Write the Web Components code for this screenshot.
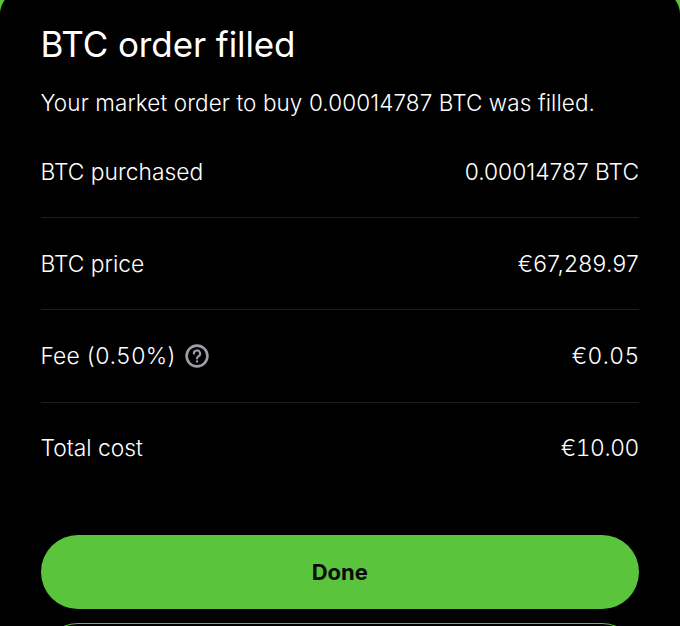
<!DOCTYPE html>
<html><head><meta charset="utf-8">
<style>
html,body{margin:0;padding:0;background:#000;}
body{width:680px;height:626px;overflow:hidden;font-family:Inter,"Liberation Sans",sans-serif;color:#fff;}
.t{font-variant-numeric:tabular-nums;}
</style></head><body>
<order-sheet>
  <span slot="title">BTC order filled</span>
  <span slot="message">Your market order to buy 0.00014787 BTC was filled.</span>
  <order-row>BTC purchased<span slot="value">0.00014787 BTC</span></order-row>
  <order-row>BTC price<span slot="value" style="letter-spacing:.25px">€67,289.97</span></order-row>
  <order-row><span class="t" style="letter-spacing:.1px">Fee (0.50%)</span><help-icon></help-icon><span slot="value" class="t" style="letter-spacing:.4px;margin-right:-.6px">€0.05</span></order-row>
  <order-row last>Total cost<span slot="value" class="t" style="letter-spacing:-.35px">€10.00</span></order-row>
  <action-button slot="actions">Done</action-button>
  <action-button slot="actions" outline></action-button>
</order-sheet>
<script>
class OrderSheet extends HTMLElement{constructor(){super();this.attachShadow({mode:'open'}).innerHTML=`<style>
:host{display:block;position:relative;width:680px;height:626px;overflow:hidden;background:#5ac43c;}
.panel{position:absolute;inset:-9px 0 -40px 0;}
.sheet{height:100%;box-sizing:border-box;background:#000;border-radius:23px 23px 0 0;padding:32px 41px 0 40.5px;display:flex;flex-direction:column;}
h1{margin:0;font-size:35px;line-height:42px;font-weight:400;letter-spacing:-.1px;}
p{margin:24px 0 0;font-size:22.5px;line-height:28px;font-weight:300;letter-spacing:.1px;color:#fff;}
.rows{margin-top:9px;display:flex;flex-direction:column;}
.actions{margin-top:42px;display:flex;flex-direction:column;gap:14px;}
</style><div class="panel"><div class="sheet"><h1><slot name="title"></slot></h1><p><slot name="message"></slot></p><div class="rows"><slot></slot></div><div class="actions"><slot name="actions"></slot></div></div></div>`}}
class OrderRow extends HTMLElement{constructor(){super();this.attachShadow({mode:'open'}).innerHTML=`<style>
:host{display:flex;justify-content:space-between;align-items:center;height:92.2px;box-sizing:border-box;border-bottom:1px solid #1d1f24;font-size:22.8px;font-weight:300;color:#fff;}
:host([last]){border-bottom:none;height:90px;}
.l{display:flex;align-items:center;gap:0;white-space:pre;}
</style><span class="l"><slot></slot></span><span><slot name="value"></slot></span>`}}
class HelpIcon extends HTMLElement{constructor(){super();this.attachShadow({mode:'open'}).innerHTML=`<style>
:host{display:inline-flex;margin-left:9px;width:24px;height:24px;}
</style><svg width="24" height="24" viewBox="0 0 24 24" fill="none" stroke="#9b9ea4" stroke-width="2.6" stroke-linecap="round"><circle cx="12" cy="12" r="10.4"/><path d="M8.9 9.6a3.1 3.1 0 1 1 4.6 2.7c-1 .6-1.5 1.1-1.5 2.2" stroke-width="2.2"/><circle cx="12" cy="17.4" r=".5" stroke-width="1.4" fill="#9b9ea4"/></svg>`}}
class ActionButton extends HTMLElement{constructor(){super();this.attachShadow({mode:'open'}).innerHTML=`<style>
:host{display:flex;align-items:center;justify-content:center;height:74px;border-radius:37px;background:#5ac43c;color:#0a0a0a;font-size:22px;font-weight:700;box-sizing:border-box;}
:host([outline]){background:transparent;border:1.5px solid #5ac43c;}
</style><slot></slot>`}}
customElements.define('order-sheet',OrderSheet);
customElements.define('order-row',OrderRow);
customElements.define('help-icon',HelpIcon);
customElements.define('action-button',ActionButton);
</script>
</body></html>
